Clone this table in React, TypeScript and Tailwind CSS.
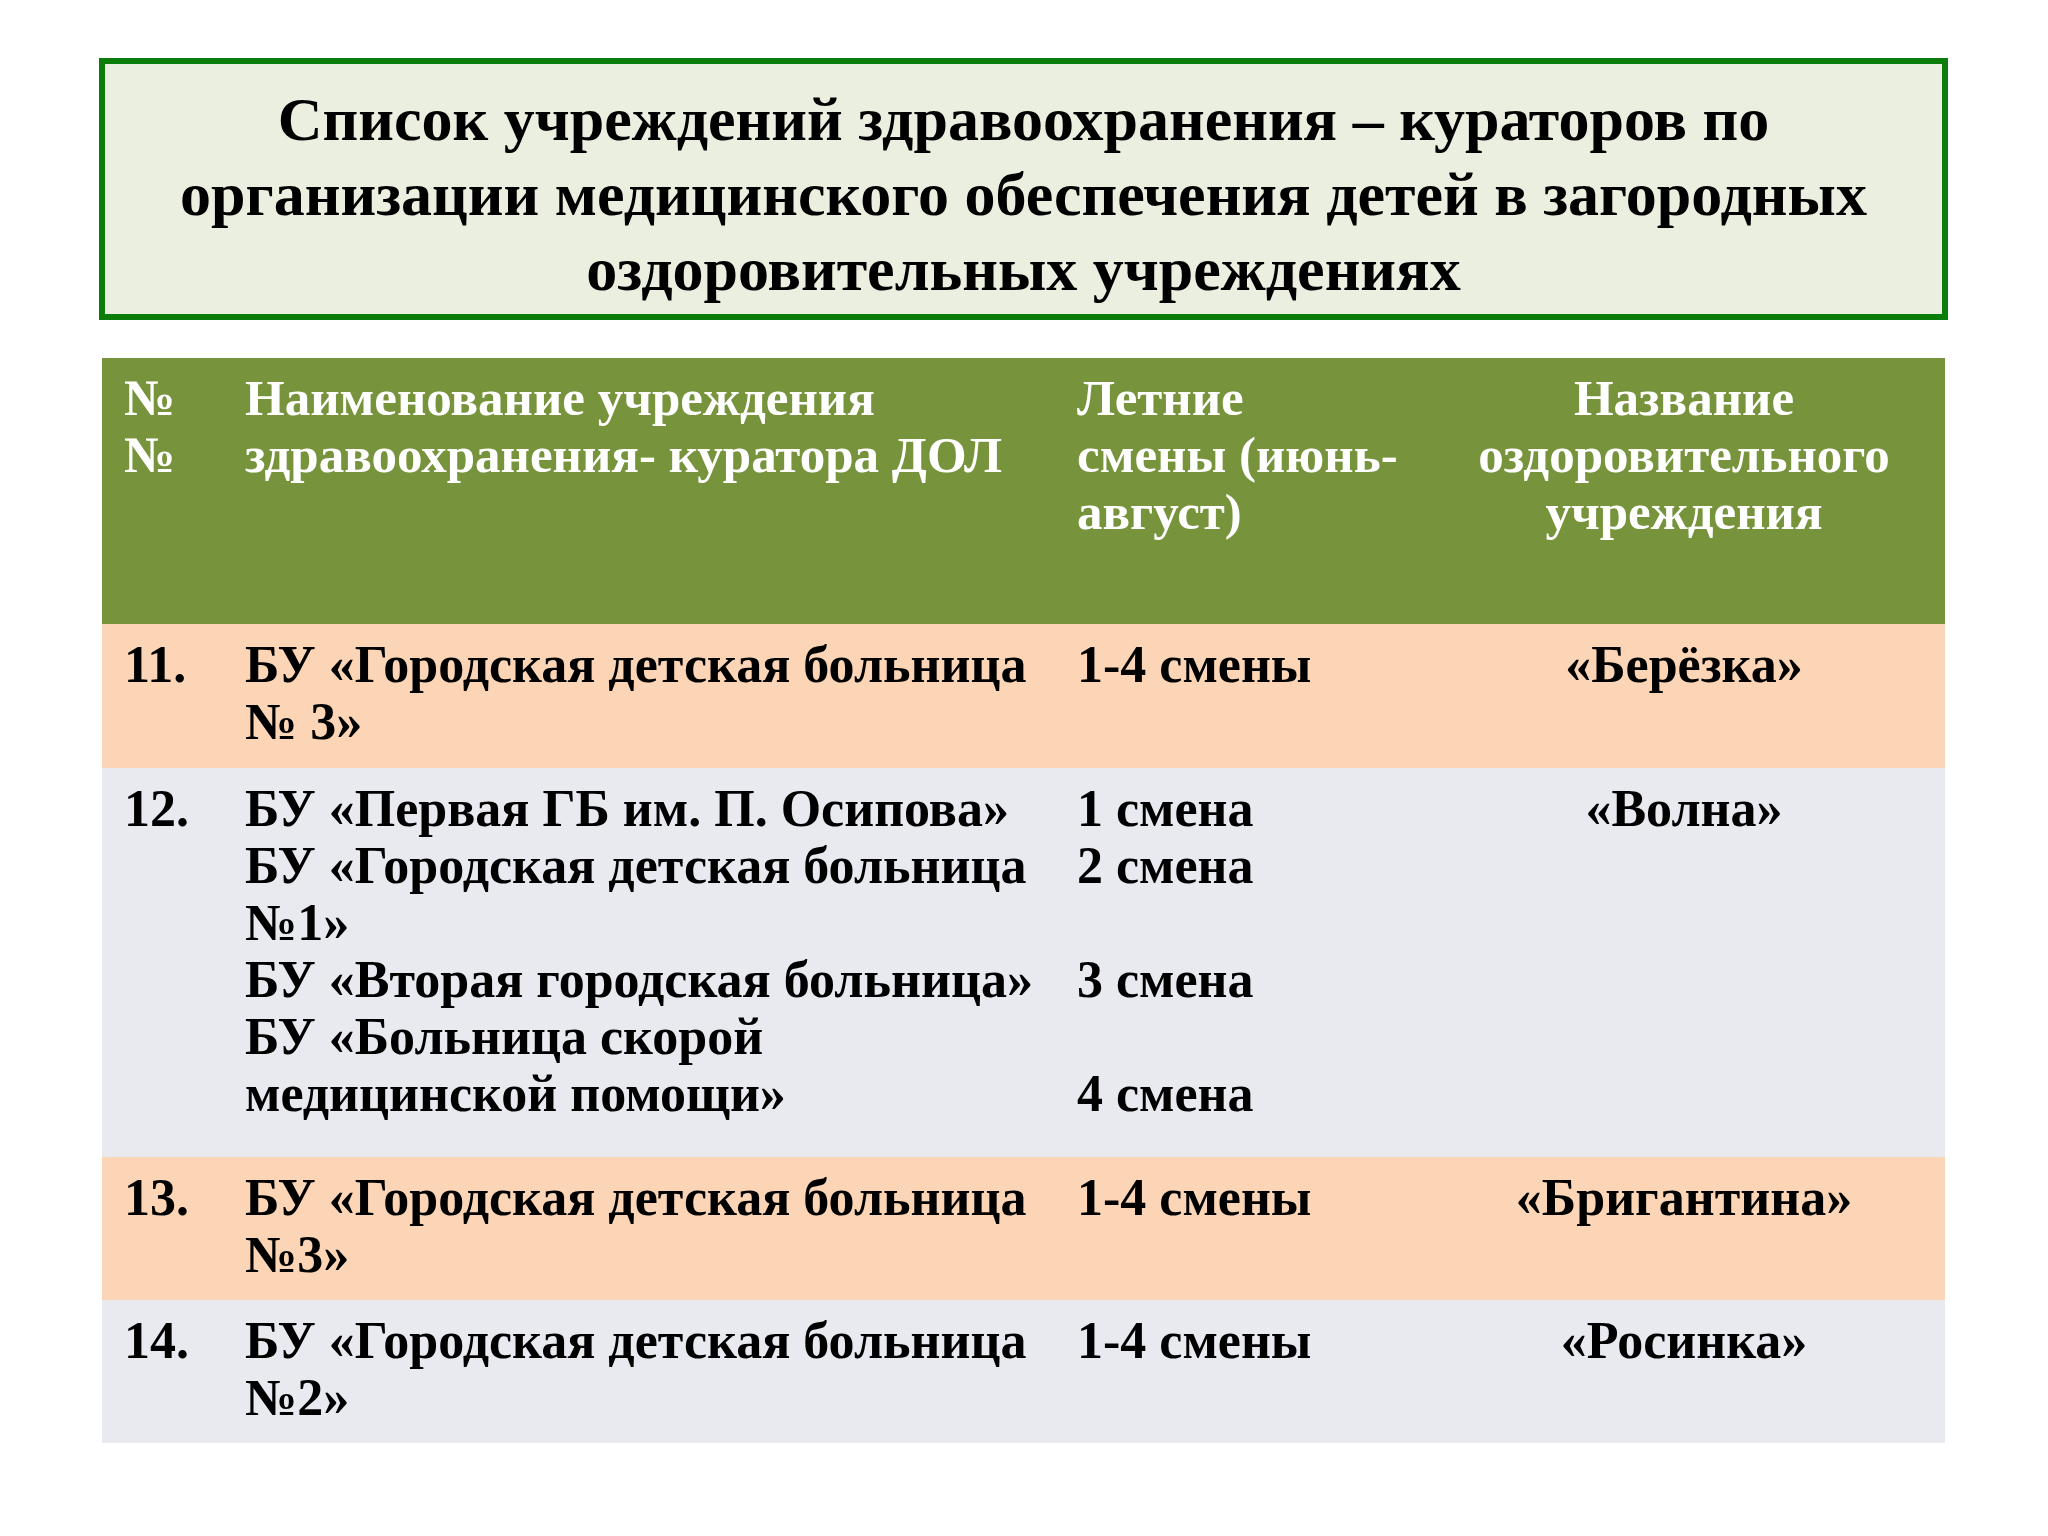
type Row = {
  num: string;
  org: string[];
  shifts: string[];
  camp: string;
  tone: 'peach' | 'grey';
  height: string;
};

const rows: Row[] = [
  {
    num: '11.',
    org: ['БУ «Городская детская больница', '№ 3»'],
    shifts: ['1-4 смены'],
    camp: '«Берёзка»',
    tone: 'peach',
    height: 'h-[144px]',
  },
  {
    num: '12.',
    org: [
      'БУ «Первая ГБ им. П. Осипова»',
      'БУ «Городская детская больница',
      '№1»',
      'БУ «Вторая городская больница»',
      'БУ «Больница скорой',
      'медицинской помощи»',
    ],
    shifts: ['1 смена', '2 смена', '\u00a0', '3 смена', '\u00a0', '4 смена'],
    camp: '«Волна»',
    tone: 'grey',
    height: 'h-[389px]',
  },
  {
    num: '13.',
    org: ['БУ «Городская детская больница', '№3»'],
    shifts: ['1-4 смены'],
    camp: '«Бригантина»',
    tone: 'peach',
    height: 'h-[143px]',
  },
  {
    num: '14.',
    org: ['БУ «Городская детская больница', '№2»'],
    shifts: ['1-4 смены'],
    camp: '«Росинка»',
    tone: 'grey',
    height: 'h-[143px]',
  },
];

const cols = 'grid grid-cols-[121px_832px_368px_522px]';

function Lines({ items }: { items: string[] }) {
  return (
    <>
      {items.map((line, i) => (
        <div key={i} className="whitespace-nowrap">
          {line}
        </div>
      ))}
    </>
  );
}

export default function App() {
  return (
    <div className="min-h-screen w-[2048px] bg-white font-['Liberation_Serif',serif]">
      <div className="pl-[99px] pt-[58px]">
        <section className="flex h-[262px] w-[1849px] items-center justify-center border-[6px] border-[#0b7d0b] bg-[#ebefdf] pt-[10px]">
          <h1 className="text-center text-[62px] font-bold leading-[75px] text-black">
            Список учреждений здравоохранения – кураторов по
            <br />
            организации медицинского обеспечения детей в загородных
            <br />
            оздоровительных учреждениях
          </h1>
        </section>

        <div className="mt-[38px] ml-[3px] w-[1843px] font-bold leading-[57px]">
          <div className={`${cols} h-[266px] bg-[#77933c] text-[51px] text-white`}>
            <div className="pl-[22px] pt-[12px]">
              <Lines items={['№', '№']} />
            </div>
            <div className="pl-[22px] pt-[12px]">
              <Lines items={['Наименование учреждения', 'здравоохранения- куратора ДОЛ']} />
            </div>
            <div className="pl-[22px] pt-[12px]">
              <Lines items={['Летние', 'смены (июнь-', 'август)']} />
            </div>
            <div className="pt-[12px] text-center">
              <Lines items={['Название', 'оздоровительного', 'учреждения']} />
            </div>
          </div>

          {rows.map((row) => (
            <div
              key={row.num}
              className={`${cols} ${row.height} text-[52px] text-black ${
                row.tone === 'peach' ? 'bg-[#fbd5b5]' : 'bg-[#e8eaf0]'
              }`}
            >
              <div className="pl-[22px] pt-[12px]">{row.num}</div>
              <div className="pl-[22px] pt-[12px]">
                <Lines items={row.org} />
              </div>
              <div className="pl-[22px] pt-[12px]">
                <Lines items={row.shifts} />
              </div>
              <div className="pt-[12px] text-center">{row.camp}</div>
            </div>
          ))}
        </div>
      </div>
    </div>
  );
}
